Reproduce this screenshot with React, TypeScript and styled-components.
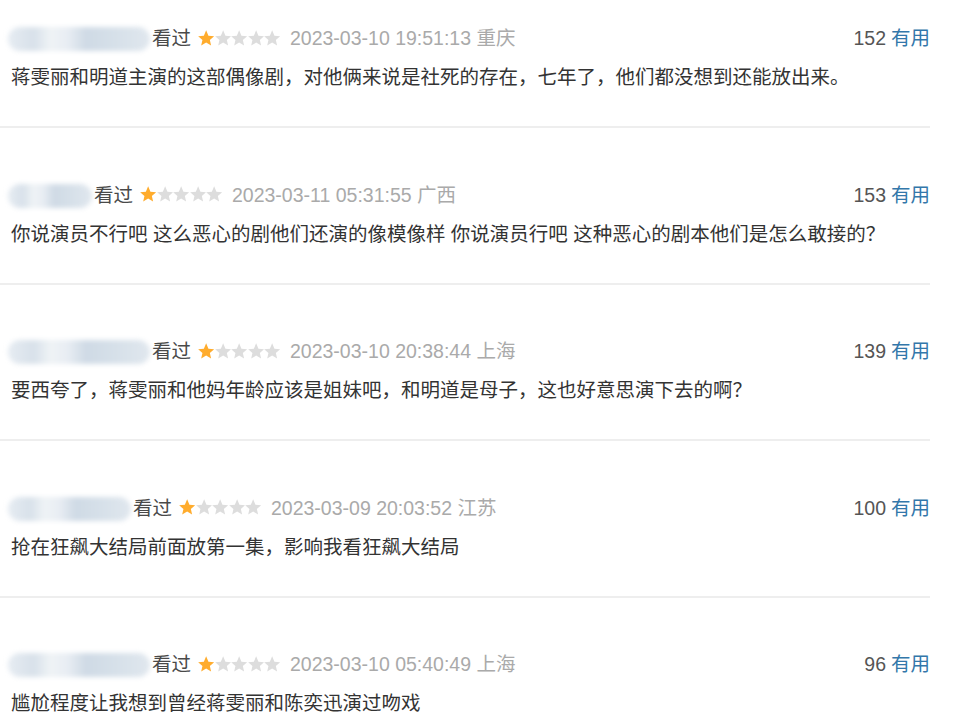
import React from "react";
import styled, { createGlobalStyle } from "styled-components";

const Global = createGlobalStyle`
  html, body { margin: 0; padding: 0; background: #ffffff; }
  body { font-family: "Liberation Sans", "Noto Sans CJK SC", sans-serif; }
`;

const List = styled.div`
  width: 930px;
  overflow: hidden;
  height: 727px;
`;

const Item = styled.div`
  padding: 53.5px 0 36px 0;
  border-bottom: 2px solid #eeeeee;
  &:first-child { padding-top: 25px; }
`;

const Meta = styled.div`
  display: flex;
  align-items: center;
  height: 26px;
  padding-left: 8px;
  font-size: 19.5px;
  line-height: 26px;
`;

const Blob = styled.div<{ $w: number }>`
  position: relative;
  width: ${(p) => p.$w}px;
  height: 26px;
  margin-right: 2px;
  flex: none;
`;

const BlobInner = styled.div`
  position: absolute;
  inset: 2px 0 0 0;
  border-radius: 12px;
  filter: blur(2.5px);
  background: linear-gradient(
    90deg,
    #e6ecf2 0%,
    #d8e1ea 18%,
    #eff3f6 30%,
    #e8edf3 42%,
    #cfdae5 55%,
    #d6e0e9 75%,
    #e0e7ee 100%
  );
`;

const Watched = styled.span`
  color: #494949;
`;

const Stars = styled.span`
  display: inline-flex;
  align-items: center;
  margin: 0 9px 0 7px;
`;

const Date = styled.span`
  color: #aaaaaa;
`;

const Spacer = styled.span`
  flex: 1;
`;

const Count = styled.span`
  color: #555555;
`;

const Useful = styled.span`
  color: #3377aa;
  margin-left: 5px;
`;

const Content = styled.p`
  margin: 13px 0 0 0;
  padding-left: 11px;
  font-size: 19.5px;
  line-height: 26px;
  color: #333333;
  white-space: nowrap;
`;

const Star: React.FC<{ on: boolean }> = ({ on }) => (
  <svg width="16.6" height="16.6" viewBox="1 1 22.4 22.4">
    <path
      d="M12 1.5l3.1 7.1 7.7.7-5.8 5.1 1.7 7.6L12 18l-6.7 4 1.7-7.6-5.8-5.1 7.7-.7z"
      fill={on ? "#ffac2d" : "#dddddd"}
    />
  </svg>
);

type Review = {
  blob: number;
  date: string;
  place: string;
  count: number;
  text: string;
};

const reviews: Review[] = [
  {
    blob: 142,
    date: "2023-03-10 19:51:13",
    place: "重庆",
    count: 152,
    text: "蒋雯丽和明道主演的这部偶像剧，对他俩来说是社死的存在，七年了，他们都没想到还能放出来。",
  },
  {
    blob: 84,
    date: "2023-03-11 05:31:55",
    place: "广西",
    count: 153,
    text: "你说演员不行吧 这么恶心的剧他们还演的像模像样 你说演员行吧 这种恶心的剧本他们是怎么敢接的？",
  },
  {
    blob: 142,
    date: "2023-03-10 20:38:44",
    place: "上海",
    count: 139,
    text: "要西夸了，蒋雯丽和他妈年龄应该是姐妹吧，和明道是母子，这也好意思演下去的啊？",
  },
  {
    blob: 123,
    date: "2023-03-09 20:03:52",
    place: "江苏",
    count: 100,
    text: "抢在狂飙大结局前面放第一集，影响我看狂飙大结局",
  },
  {
    blob: 142,
    date: "2023-03-10 05:40:49",
    place: "上海",
    count: 96,
    text: "尴尬程度让我想到曾经蒋雯丽和陈奕迅演过吻戏",
  },
];

export default function App() {
  return (
    <>
      <Global />
      <List>
        {reviews.map((r, i) => (
          <Item key={i}>
            <Meta>
              <Blob $w={r.blob}>
                <BlobInner />
              </Blob>
              <Watched>看过</Watched>
              <Stars>
                {[0, 1, 2, 3, 4].map((s) => (
                  <Star key={s} on={s === 0} />
                ))}
              </Stars>
              <Date>
                {r.date} {r.place}
              </Date>
              <Spacer />
              <Count>{r.count}</Count>
              <Useful>有用</Useful>
            </Meta>
            <Content>{r.text}</Content>
          </Item>
        ))}
      </List>
    </>
  );
}
